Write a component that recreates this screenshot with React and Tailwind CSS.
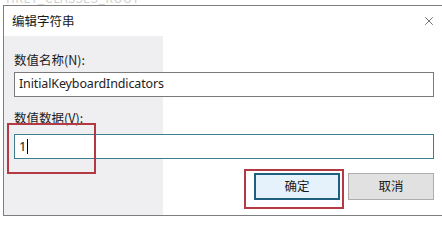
import { X } from 'lucide-react';

const cjk = "font-['Microsoft_YaHei','Noto_Sans_CJK_SC',sans-serif]";

export default function App() {
  return (
    <div className={`relative h-[220px] w-[442px] overflow-hidden bg-white ${cjk} text-[#1a1a1a]`}>
      {/* registry editor window behind the dialog */}
      <div className="h-[5px] overflow-hidden pl-[6px]">
        <div className="-mt-[8px] text-[12px] leading-[12px] tracking-[.04em] text-[#d0d0d0]">HKEY_CLASSES_ROOT</div>
      </div>

      <div className="ml-[3px] h-[211px] w-[439px] border-l border-t border-b border-[#7d7d7d] bg-white">
        <div className="flex h-[30px] items-center justify-between pl-[8px] pr-[6px]">
          <span className="text-[12.5px] leading-none">编辑字符串</span>
          <X size={14} strokeWidth={1.2} className="text-[#333]" />
        </div>

        <div className="h-[179px] bg-[linear-gradient(to_right,#efeef1_159px,#ffffff_159px)] pl-[10px] pr-[8px] pt-[16px]">
          <div className="text-[12.5px] leading-[16px]">数值名称(N):</div>
          <div className="mt-[4px] flex h-[25px] items-center border border-[#7a7a7a] bg-white pl-[4px] font-['Noto_Sans',sans-serif] text-[12.5px] tracking-[-.01em] text-[#222]">
            InitialKeyboardIndicators
          </div>

          <div className="mt-[13px] text-[12.5px] leading-[16px]">数值数据(V):</div>
          <div className="mt-[8px] flex h-[25px] items-center border border-[#3d7f8e] bg-white pl-[4px] font-['Noto_Sans',sans-serif] text-[13px] text-[#222]">
            1<span className="ml-px h-[15px] w-px bg-black" />
          </div>

          <div className="mt-[14px] flex justify-end gap-[8px]">
            <button className="h-[27px] w-[86px] border-2 border-[#1f5f80] bg-[#e5f1fb] text-[12.5px] leading-none">确定</button>
            <button className="h-[27px] w-[86px] border border-[#adadad] bg-[#e1e1e1] text-[12.5px] leading-none">取消</button>
          </div>
        </div>
      </div>

      {/* red highlight boxes */}
      <div className="absolute left-[7px] top-[123px] h-[51px] w-[89px] border-2 border-[#b33a45]" />
      <div className="absolute left-[244px] top-[169px] h-[40px] w-[100px] border-2 border-[#b33a45]" />
    </div>
  );
}
